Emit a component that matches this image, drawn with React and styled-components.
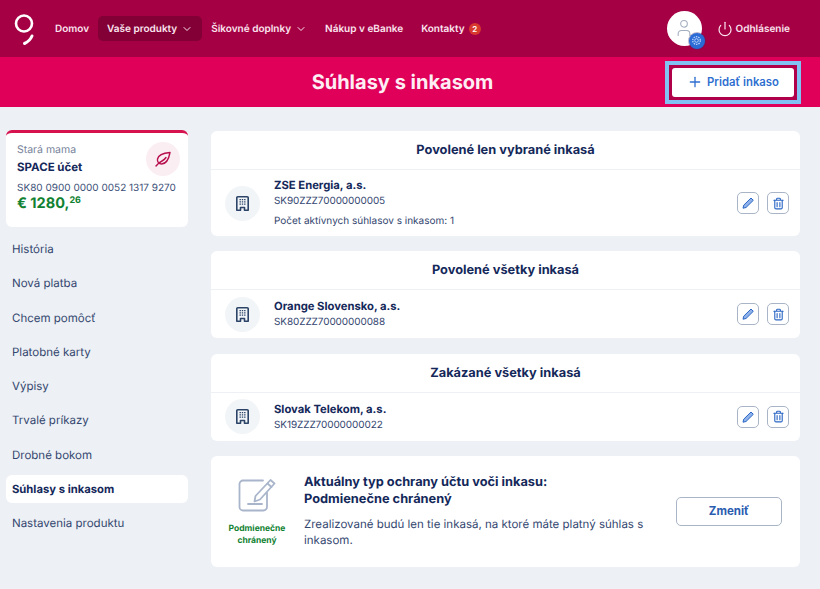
import React from "react";
import styled, { createGlobalStyle } from "styled-components";
import { ChevronDown, Power, Plus, User } from "lucide-react";

const GlobalStyle = createGlobalStyle`
  html, body {
    margin: 0;
    padding: 0;
    background: #edf0f4;
    font-family: "Inter", "Liberation Sans", sans-serif;
    color: #14285a;
    text-rendering: geometricPrecision;
  }
  * { box-sizing: border-box; }
`;

const sideItems = [
  "História",
  "Nová platba",
  "Chcem pomôcť",
  "Platobné karty",
  "Výpisy",
  "Trvalé príkazy",
  "Drobné bokom",
  "Súhlasy s inkasom",
  "Nastavenia produktu",
];

const groups = [
  {
    title: "Povolené len vybrané inkasá",
    name: "ZSE Energia, a.s.",
    iban: "SK90ZZZ70000000005",
    note: "Počet aktívnych súhlasov s inkasom: 1",
  },
  { title: "Povolené všetky inkasá", name: "Orange Slovensko, a.s.", iban: "SK80ZZZ70000000088" },
  { title: "Zakázané všetky inkasá", name: "Slovak Telekom, a.s.", iban: "SK19ZZZ70000000022" },
];

const Logo = () => (
  <svg width="20" height="32" viewBox="0 0 20 32" fill="none" stroke="#fff">
    <circle cx="10" cy="9.500" r="8" strokeWidth="2.600" />
    <path d="M18 22 C16.500 25.500 14 28 10.500 29.500" strokeWidth="3" strokeLinecap="round" />
  </svg>
);

const Leaf = () => (
  <svg width="16" height="16" viewBox="0 0 16 16" fill="none" stroke="#b8104f" strokeWidth="1.400" strokeLinecap="round" strokeLinejoin="round">
    <path d="M15 1.500 C9 2 3.500 3 2.500 8 C2 11 4 13 6.500 13 C11.500 13 14 7 15 1.500 Z" />
    <path d="M1 15 C3 12.500 5 11 7 10 C9 9 10 8 11 6.500" />
  </svg>
);

const Building = () => (
  <svg width="13" height="15" viewBox="0 0 13 15" fill="none" stroke="#2b4468" strokeWidth="1.600" strokeLinejoin="round">
    <path d="M1.800 .8 H11.200 a1 1 0 0 1 1 1 V14.200 H8.500 V11.500 H4.500 V14.200 H.8 V1.800 a1 1 0 0 1 1 -1 Z" />
    <path d="M3.500 3.600 H9.500 M3.500 5.900 H9.500 M3.500 8.200 H9.500" strokeWidth="1.300" strokeDasharray="1.400 .9" />
  </svg>
);

const PencilIcon = () => (
  <svg width="14" height="14" viewBox="0 0 14 14" fill="#8fb2ea" stroke="#2a66c4" strokeWidth="1" strokeLinejoin="round">
    <path d="M10 2 L12.300 4.300 L5 11.500 L2 12.200 L2.700 9.200 Z" />
  </svg>
);

const TrashIcon = () => (
  <svg width="13" height="13" viewBox="0 0 14 14" fill="none" stroke="#2a66c4" strokeWidth="1.200" strokeLinecap="round" strokeLinejoin="round">
    <path d="M2 3.500 H12 M5 3.300 V2.200 a.9 .9 0 0 1 .9 -.9 H8.100 a.9 .9 0 0 1 .9 .9 V3.300" />
    <path d="M3 3.500 V11.500 a1.300 1.300 0 0 0 1.300 1.300 H9.700 a1.300 1.300 0 0 0 1.300 -1.300 V3.500" />
    <path d="M5.500 6 V10.500 M8.500 6 V10.500" />
  </svg>
);

const GearIcon = () => (
  <svg width="11" height="11" viewBox="0 0 11 11" fill="none" stroke="#bcd4fb" strokeWidth="1">
    <circle cx="5.500" cy="5.500" r="1.800" />
    <circle cx="5.500" cy="5.500" r="3.800" strokeDasharray="1.500 .9" strokeWidth="1.300" />
  </svg>
);

const SignIcon = () => (
  <svg width="38" height="33" viewBox="0 0 38 33" fill="none" stroke="#a9b5cb" strokeWidth="1.800" strokeLinecap="round" strokeLinejoin="round">
    <path d="M25 1.500 H5 a3.500 3.500 0 0 0 -3.500 3.500 V28 a3.500 3.500 0 0 0 3.500 3.500 H25.500 a3.500 3.500 0 0 0 3.500 -3.500 V14" />
    <path d="M32.500 1 L36.500 4.500 L22 20.500 L16.500 22.500 L17.500 17 Z" />
    <path d="M29.500 4.500 L33.500 8" />
    <path d="M10 25 H24" />
  </svg>
);

const App = () => (
  <>
    <GlobalStyle />
    <Page>
      <TopBar>
        <LogoSlot>
          <Logo />
        </LogoSlot>
        <TopNav>
          <TopLink>Domov</TopLink>
          <TopLink $active>
            Vaše produkty <ChevronDown size={12} strokeWidth={2} />
          </TopLink>
          <TopLink>
            Šikovné doplnky <ChevronDown size={12} strokeWidth={2} />
          </TopLink>
          <TopLink>Nákup v eBanke</TopLink>
          <TopLink>
            Kontakty <Badge>2</Badge>
          </TopLink>
        </TopNav>
        <UserArea>
          <Avatar>
            <User size={20} strokeWidth={1.3} color="#a4aebf" />
            <AvatarBadge>
              <GearIcon />
            </AvatarBadge>
          </Avatar>
          <Logout>
            <Power size={16} strokeWidth={1.8} />
            Odhlásenie
          </Logout>
        </UserArea>
      </TopBar>

      <TitleBar>
        <PageTitle>Súhlasy s inkasom</PageTitle>
        <AddHighlight>
          <AddButton>
            <Plus size={16} strokeWidth={2} />
            Pridať inkaso
          </AddButton>
        </AddHighlight>
      </TitleBar>

      <Content>
        <Sidebar>
          <AccountCard>
            <AccountOwner>Stará mama</AccountOwner>
            <AccountName>SPACE účet</AccountName>
            <AccountIban>SK80 0900 0000 0052 1317 9270</AccountIban>
            <AccountBalance>
              € 1280,<sup>26</sup>
            </AccountBalance>
            <LeafBadge>
              <Leaf />
            </LeafBadge>
          </AccountCard>
          <SideNav>
            {sideItems.map((item) => (
              <SideItem key={item} $active={item === "Súhlasy s inkasom"}>
                {item}
              </SideItem>
            ))}
          </SideNav>
        </Sidebar>

        <Main>
          {groups.map((group) => (
            <Card key={group.title}>
              <CardTitle>{group.title}</CardTitle>
              <Row>
                <RowIcon>
                  <Building />
                </RowIcon>
                <RowText>
                  <RowName>{group.name}</RowName>
                  <RowIban>{group.iban}</RowIban>
                  {group.note && <RowNote>{group.note}</RowNote>}
                </RowText>
                <RowActions>
                  <IconButton>
                    <PencilIcon />
                  </IconButton>
                  <IconButton>
                    <TrashIcon />
                  </IconButton>
                </RowActions>
              </Row>
            </Card>
          ))}

          <ProtectionCard>
            <ProtectionBadge>
              <SignIcon />
              <ProtectionLabel>Podmienečne chránený</ProtectionLabel>
            </ProtectionBadge>
            <ProtectionText>
              <ProtectionTitle>
                Aktuálny typ ochrany účtu voči inkasu:
                <br />
                Podmienečne chránený
              </ProtectionTitle>
              <ProtectionDesc>
                Zrealizované budú len tie inkasá, na ktoré máte platný súhlas s inkasom.
              </ProtectionDesc>
            </ProtectionText>
            <ChangeButton>Zmeniť</ChangeButton>
          </ProtectionCard>
        </Main>
      </Content>
    </Page>
  </>
);

export default App;

const Page = styled.div`
  width: 820px;
  height: 589px;
  overflow: hidden;
  background: #edf0f4;
`;

const TopBar = styled.header`
  height: 57px;
  display: flex;
  align-items: center;
  padding: 0 30px 0 14px;
  background: #a50044;
  color: #fff;
`;

const LogoSlot = styled.div`
  display: flex;
  width: 20px;
  height: 32px;
  margin-right: 12px;
  margin-top: 2px;
`;

const TopNav = styled.nav`
  display: flex;
  align-items: center;
`;

const TopLink = styled.a`
  display: flex;
  align-items: center;
  gap: 4px;
  height: 25px;
  padding: 0 9px;
  border-radius: 5px;
  font-size: 10px;
  font-weight: 600;
  white-space: nowrap;
  color: #fbe4ee;
  background: ${(p) => (p.$active ? "#820036" : "transparent")};
`;

const Badge = styled.span`
  display: inline-flex;
  align-items: center;
  justify-content: center;
  width: 12px;
  height: 12px;
  border-radius: 50%;
  font-size: 8px;
  background: #d8392f;
  color: #fff;
`;

const UserArea = styled.div`
  display: flex;
  align-items: center;
  gap: 15px;
  margin-left: auto;
`;

const Avatar = styled.div`
  position: relative;
  display: flex;
  align-items: center;
  justify-content: center;
  width: 35px;
  height: 35px;
  padding-bottom: 2px;
  border-radius: 50%;
  background: #fff;
`;

const AvatarBadge = styled.span`
  position: absolute;
  right: -3px;
  bottom: -2.500px;
  display: flex;
  align-items: center;
  justify-content: center;
  width: 16px;
  height: 16px;
  border-radius: 50%;
  background: #2a6bd6;
  box-shadow: 0 0 0 1px rgba(60, 40, 110, 0.35);
`;

const Logout = styled.a`
  display: flex;
  align-items: center;
  gap: 3px;
  font-size: 10px;
  font-weight: 600;
  color: #fbe4ee;
`;

const TitleBar = styled.section`
  position: relative;
  height: 50px;
  display: flex;
  align-items: center;
  justify-content: center;
  padding-right: 15px;
  background: #e0005a;
  color: #fff;
`;

const PageTitle = styled.h1`
  margin: 0;
  font-size: 20px;
  font-weight: 700;
  color: #fdeef4;
`;

const AddHighlight = styled.div`
  position: absolute;
  top: 3.500px;
  right: 19px;
  padding: 3px;
  border: 4px solid #82c2f2;
  background: #b00049;
`;

const AddButton = styled.button`
  display: flex;
  align-items: center;
  justify-content: center;
  gap: 4px;
  width: 122px;
  height: 29px;
  border: 0;
  border-radius: 3px;
  background: #fff;
  color: #2f6fd0;
  font-family: inherit;
  font-size: 11.300px;
  font-weight: 600;
`;

const Content = styled.div`
  display: flex;
  align-items: flex-start;
  gap: 23px;
  padding: 23px 20px 0 6px;
`;

const Sidebar = styled.aside`
  flex: 0 0 182px;
`;

const AccountCard = styled.div`
  position: relative;
  height: 97px;
  padding: 10px 11px 0;
  border-top: 3px solid #d6124f;
  border-radius: 6px;
  background: #fff;
`;

const AccountOwner = styled.div`
  font-size: 10.500px;
  line-height: 14px;
  color: #79849b;
`;

const AccountName = styled.div`
  margin-top: 3px;
  font-size: 11.500px;
  line-height: 14px;
  font-weight: 700;
`;

const AccountIban = styled.div`
  margin-top: 7px;
  font-size: 10px;
  line-height: 14px;
  color: #3b4f78;
`;

const AccountBalance = styled.div`
  font-size: 14.500px;
  line-height: 17px;
  font-weight: 700;
  color: #118232;

  sup {
    font-size: 9px;
    line-height: 0;
    vertical-align: 5px;
  }
`;

const LeafBadge = styled.div`
  position: absolute;
  top: 9px;
  right: 8px;
  display: flex;
  align-items: center;
  justify-content: center;
  width: 34px;
  height: 34px;
  border-radius: 50%;
  background: #fbeef3;
`;

const SideNav = styled.nav`
  display: flex;
  flex-direction: column;
  gap: 6.300px;
  margin-top: 8px;
`;

const SideItem = styled.a`
  height: 28px;
  padding: 0 6px;
  border-radius: 6px;
  font-size: ${(p) => (p.$active ? "11.250px" : "11.500px")};
  line-height: 28px;
  font-weight: ${(p) => (p.$active ? 700 : 400)};
  color: ${(p) => (p.$active ? "#14285a" : "#33466f")};
  background: ${(p) => (p.$active ? "#fff" : "transparent")};
`;

const Main = styled.main`
  flex: 1;
  display: flex;
  flex-direction: column;
  gap: 15.300px;
  margin-top: 1px;
`;

const Card = styled.section`
  border-radius: 6px;
  background: #fff;
`;

const CardTitle = styled.h2`
  height: 39px;
  margin: 0;
  border-bottom: 1px solid #edf0f4;
  font-size: 12.800px;
  line-height: 39px;
  font-weight: 700;
  text-align: center;
  color: #14285a;
`;

const Row = styled.div`
  display: flex;
  align-items: center;
  min-height: 48px;
  padding: 0 11px 0 14px;
`;

const RowIcon = styled.div`
  display: flex;
  align-items: center;
  justify-content: center;
  width: 35px;
  height: 35px;
  border-radius: 50%;
  background: #f2f5f7;
  margin-right: 14px;
`;

const RowText = styled.div`
  flex: 1;
  padding: 8px 0 7px;
`;

const RowName = styled.div`
  font-size: 11.250px;
  line-height: 15px;
  font-weight: 700;
`;

const RowIban = styled.div`
  margin-top: 1px;
  font-size: 10px;
  line-height: 15px;
  letter-spacing: -0.1px;
  color: #33466f;
`;

const RowNote = styled.div`
  margin-top: 5px;
  font-size: 10px;
  line-height: 15px;
  color: #33466f;
`;

const RowActions = styled.div`
  display: flex;
  gap: 8px;
`;

const IconButton = styled.button`
  display: flex;
  align-items: center;
  justify-content: center;
  width: 22px;
  height: 22px;
  padding: 0;
  border: 1.500px solid #a9b5c6;
  border-radius: 5px;
  background: #fff;
`;

const ProtectionCard = styled.section`
  display: flex;
  align-items: center;
  height: 111px;
  padding: 0 18px 0 15px;
  border-radius: 6px;
  background: #fff;
`;

const ProtectionBadge = styled.div`
  display: flex;
  flex-direction: column;
  align-items: center;
  width: 62px;
  margin-right: 16px;
  padding-top: 4px;
`;

const ProtectionLabel = styled.div`
  margin-top: 12px;
  font-size: 8.500px;
  line-height: 11.500px;
  font-weight: 700;
  text-align: center;
  color: #118232;
`;

const ProtectionText = styled.div`
  flex: 1;
  padding-bottom: 1px;
`;

const ProtectionTitle = styled.div`
  font-size: 12.800px;
  line-height: 17px;
  font-weight: 700;
`;

const ProtectionDesc = styled.p`
  margin: 8.500px 0 0;
  max-width: 345px;
  font-size: 11.500px;
  line-height: 16px;
  color: #33466f;
`;

const ChangeButton = styled.button`
  width: 106px;
  height: 29px;
  margin-left: 15px;
  border: 1.500px solid #a9b5c6;
  border-radius: 5px;
  background: #fff;
  color: #2a5cb0;
  font-family: inherit;
  font-size: 11.500px;
  font-weight: 700;
`;
